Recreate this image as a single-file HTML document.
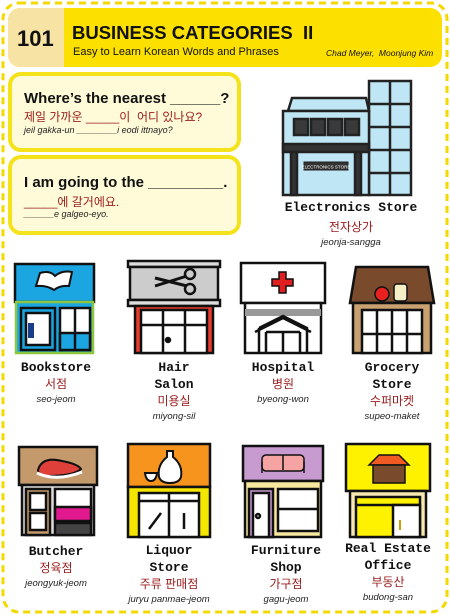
<!DOCTYPE html>
<html><head><meta charset="utf-8"><style>
*{margin:0;padding:0;box-sizing:border-box}
body{width:450px;height:616px;background:#fff;position:relative;overflow:hidden;font-family:"Liberation Sans","Noto Sans CJK KR",sans-serif}
.a{position:absolute}
.lab{position:absolute;text-align:center;font-family:"Liberation Mono","Noto Sans CJK KR",monospace;font-weight:bold;font-size:13px;line-height:17px;color:#111;width:110px}
.ko{color:#9a1b1b;font-family:"Liberation Sans","Noto Sans CJK KR",sans-serif;font-weight:normal;font-size:12px;line-height:17px;display:block}
.ro{font-family:"Liberation Sans",sans-serif;font-style:italic;font-weight:normal;font-size:9.5px;line-height:14px;color:#222;display:block}
.box{position:absolute;left:8px;width:233px;height:80px;border:4px solid #f4e21a;border-radius:13px;background:#fffbd8}
.box b{position:absolute;left:12px;font-size:15px;color:#111}
.box .k{position:absolute;left:12px;font-size:12px;color:#9a1b1b;font-family:"Liberation Sans","Noto Sans CJK KR",sans-serif}
.box i{position:absolute;left:12px;font-size:9px;color:#222}
</style></head><body>
<svg class="a" style="left:0;top:0" width="450" height="616"><rect x="3" y="3" width="444" height="609" rx="16" fill="none" stroke="#f4d900" stroke-width="3" stroke-dasharray="7,5"/></svg>
<div class="a" style="left:8px;top:8px;width:434px;height:59px;background:#fce000;border-radius:12px;overflow:hidden">
<div class="a" style="left:0;top:0;width:56px;height:59px;background:#f7e3a3"></div>
<div class="a" style="left:9px;top:18px;font-size:22px;font-weight:bold;color:#111">101</div>
<div class="a" style="left:64px;top:14px;font-size:18.5px;font-weight:bold;color:#111">BUSINESS CATEGORIES&nbsp; II</div>
<div class="a" style="left:65px;top:38px;font-size:11px;color:#111">Easy to Learn Korean Words and Phrases</div>
<div class="a" style="left:318px;top:40px;font-size:8.5px;font-style:italic;color:#111">Chad Meyer,&nbsp; Moonjung Kim</div>
</div>
<div class="box" style="top:72px"><b style="top:14px">Where’s the nearest ______?</b><span class="k" style="top:32px">제일 가까운 _____이 &nbsp;어디 있나요?</span><i style="top:49px">jeil gakka-un ________i eodi ittnayo?</i></div>
<div class="box" style="top:155px"><b style="top:15px">I am going to the _________.</b><span class="k" style="top:34px">_____에 갈거에요.</span><i style="top:50px">______e galgeo-eyo.</i></div>

<svg class="a" style="left:280px;top:78px" width="135" height="120" viewBox="0 0 135 120" stroke="#222" stroke-width="2.5">
<rect x="89" y="3" width="42" height="114" fill="#bfe6f4"/>
<path d="M110 3V117M89 26H131M89 49H131M89 72H131M89 95H131" fill="none"/>
<path d="M8 33L12 20H86L89 33Z" fill="#bfe6f4"/>
<rect x="3" y="33" width="86" height="84" fill="#bfe6f4"/>
<g fill="#3a3a3a"><rect x="14" y="41" width="14" height="16"/><rect x="31" y="41" width="14" height="16"/><rect x="48" y="41" width="14" height="16"/><rect x="65" y="41" width="14" height="16"/></g>
<rect x="3" y="66" width="86" height="8" fill="#333"/>
<rect x="11" y="74" width="6" height="43" fill="#333"/><rect x="75" y="74" width="6" height="43" fill="#333"/>
<rect x="24" y="84" width="44" height="8" fill="#333" stroke-width="1"/>
<text x="46" y="90.5" font-size="4.5" fill="#fff" stroke="none" text-anchor="middle" font-family="Liberation Sans">ELECTRONICS STORE</text>
</svg>
<div class="lab" style="left:271px;top:199px;width:160px">Electronics Store<span class="ko" style="margin-top:3px">전자상가</span><span class="ro">jeonja-sangga</span></div>

<svg class="a" style="left:12px;top:260px" width="86" height="96" stroke="#111" stroke-width="2.5">
<rect x="3" y="4" width="79" height="38" fill="#1ba6e2"/>
<path d="M24 26L28 13Q38 10 43 16Q50 10 60 12L57 26Q48 25 42 30Q35 25 24 26Z" fill="#fff" stroke-width="2"/>
<rect x="4" y="42" width="77" height="51" fill="#1ba6e2" stroke="#8bc63f"/>
<rect x="9" y="48" width="34" height="42" fill="#1ba6e2"/>
<rect x="14" y="53" width="24" height="32" fill="#fff"/>
<rect x="48" y="48" width="30" height="42" fill="#fff"/>
<rect x="48" y="73" width="30" height="17" fill="#1ba6e2"/>
<path d="M63 48V90" fill="none"/>
<rect x="16" y="63" width="6" height="15" fill="#1a3d8a" stroke="none"/>
</svg>
<div class="lab" style="left:6px;top:359px;width:100px">Bookstore<span class="ko">서점</span><span class="ro">seo-jeom</span></div>

<svg class="a" style="left:125px;top:258px" width="98" height="98" stroke="#111" stroke-width="2.5">
<rect x="3" y="3" width="92" height="6" fill="#ddd"/>
<rect x="5" y="9" width="88" height="33" fill="#ccc"/>
<rect x="3" y="42" width="92" height="6" fill="#ddd"/>
<path d="M30 28L62 18M30 20L62 28" stroke-width="3"/>
<circle cx="65" cy="16" r="5" fill="#ccc"/><circle cx="65" cy="31" r="5" fill="#ccc"/>
<rect x="10" y="48" width="78" height="47" fill="#e83a2e"/>
<rect x="16" y="52" width="66" height="43" fill="#fff"/>
<path d="M16 67H82M38 52V95M60 52V95" fill="none"/>
<circle cx="43" cy="82" r="2" fill="#111"/>
</svg>
<div class="lab" style="left:119px;top:359px">Hair<br>Salon<span class="ko">미용실</span><span class="ro">miyong-sil</span></div>

<svg class="a" style="left:238px;top:260px" width="90" height="96" stroke="#111" stroke-width="2.5">
<rect x="3" y="3" width="84" height="40" fill="#fff"/>
<path d="M41 12h7v7h7v7h-7v7h-7v-7h-7v-7h7z" fill="#e02020" stroke-width="1.5"/>
<rect x="7" y="43" width="76" height="50" fill="#fff"/>
<rect x="7" y="49" width="76" height="7" fill="#999" stroke="none"/>
<path d="M21 68L45 56L69 68V93M21 68V93M17 72L45 58L73 72M28 72H62M28 72V93M62 72V93M45 72V93" fill="none"/>
</svg>
<div class="lab" style="left:228px;top:359px">Hospital<span class="ko">병원</span><span class="ro">byeong-won</span></div>

<svg class="a" style="left:347px;top:260px" width="90" height="96" stroke="#111" stroke-width="2.5">
<path d="M3 43L9 7H81L87 43Z" fill="#7a4a2c"/>
<circle cx="35" cy="34" r="7" fill="#e82020" stroke-width="1.5"/>
<rect x="47" y="24" width="13" height="17" rx="3" fill="#f5efc8" stroke-width="1.5"/>
<rect x="6" y="43" width="78" height="50" fill="#c9a070"/>
<rect x="15" y="50" width="60" height="43" fill="#fff"/>
<path d="M30 50V93M45 50V93M60 50V93M15 74H75" fill="none"/>
</svg>
<div class="lab" style="left:337px;top:359px">Grocery<br>Store<span class="ko">수퍼마켓</span><span class="ro">supeo-maket</span></div>

<svg class="a" style="left:16px;top:444px" width="84" height="94" stroke="#111" stroke-width="2.5">
<rect x="3" y="3" width="78" height="38" fill="#c49a6c"/>
<path d="M22 26Q26 12 46 17Q62 20 65 25Q58 32 30 32Q22 31 22 26Z" fill="#e0403a" stroke-width="2"/>
<path d="M21 29Q40 38 66 28" fill="none" stroke="#fff" stroke-width="3"/>
<rect x="6" y="41" width="72" height="50" fill="#ddd"/>
<rect x="10" y="45" width="24" height="46" fill="#c49a6c"/>
<rect x="14" y="49" width="16" height="17" fill="#fff"/><rect x="14" y="69" width="16" height="17" fill="#fff"/>
<rect x="39" y="45" width="36" height="30" fill="#fff"/>
<rect x="39" y="63" width="36" height="14" fill="#e0198f"/>
<rect x="39" y="79" width="36" height="12" fill="#444"/>
</svg>
<div class="lab" style="left:6px;top:543px;width:100px">Butcher<span class="ko">정육점</span><span class="ro">jeongyuk-jeom</span></div>

<svg class="a" style="left:125px;top:441px" width="88" height="98" stroke="#111" stroke-width="2.5">
<rect x="3" y="3" width="82" height="43" fill="#f7941d"/>
<path d="M42 10H48V16Q58 24 56 36Q54 42 45 42Q36 42 34 36Q32 24 42 16Z" fill="#fff" stroke-width="2"/>
<path d="M20 32H32Q31 40 26 40Q21 40 20 32Z" fill="#fff" stroke-width="2"/>
<rect x="3" y="46" width="82" height="50" fill="#f5e600"/>
<rect x="14" y="52" width="60" height="44" fill="#fff"/>
<path d="M14 60H74M44 52V96M24 88L36 72M59 72V88" fill="none"/>
</svg>
<div class="lab" style="left:114px;top:542px">Liquor<br>Store<span class="ko">주류 판매점</span><span class="ro">juryu panmae-jeom</span></div>

<svg class="a" style="left:240px;top:443px" width="86" height="96" stroke="#111" stroke-width="2.5">
<rect x="3" y="3" width="80" height="35" fill="#c79ad0"/>
<rect x="22" y="12" width="42" height="16" rx="4" fill="#f5a3a3" stroke-width="1.5"/>
<path d="M22 19V30M43 12V27M64 19V30" fill="none" stroke-width="1.5"/>
<rect x="5" y="38" width="76" height="56" fill="#f7e8a0"/>
<rect x="9" y="46" width="24" height="48" fill="#c79ad0"/>
<rect x="13" y="50" width="16" height="44" fill="#fff"/>
<circle cx="18" cy="73" r="2" fill="#fff"/>
<rect x="38" y="46" width="40" height="42" fill="#fff"/><path d="M38 66H78" fill="none"/>
</svg>
<div class="lab" style="left:231px;top:542px">Furniture<br>Shop<span class="ko">가구점</span><span class="ro">gagu-jeom</span></div>

<svg class="a" style="left:343px;top:441px" width="90" height="98" stroke="#111" stroke-width="2.5">
<rect x="3" y="3" width="84" height="47" fill="#fff200"/>
<path d="M26 24L36 14H56L66 24Z" fill="#f15a22" stroke-width="1.5"/>
<rect x="30" y="24" width="32" height="18" fill="#7a4a2c" stroke-width="1.5"/>
<rect x="7" y="50" width="76" height="46" fill="#f7e8b0"/>
<rect x="13" y="56" width="64" height="40" fill="#fff200"/>
<path d="M13 64H77" fill="none"/>
<rect x="50" y="64" width="27" height="32" fill="#fff"/>
<path d="M57 79V89" fill="none" stroke="#c9a000" stroke-width="2"/>
</svg>
<div class="lab" style="left:333px;top:540px">Real Estate<br>Office<span class="ko">부동산</span><span class="ro">budong-san</span></div>
</body></html>
